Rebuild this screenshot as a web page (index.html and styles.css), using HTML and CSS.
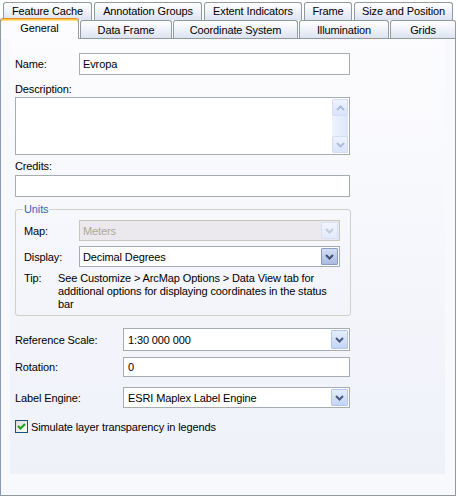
FILE: index.html
```html
<!DOCTYPE html>
<html>
<head>
<meta charset="utf-8">
<link rel="stylesheet" href="styles.css">
</head>
<body>
<div class="tabs">
  <div class="row row1">
    <div class="tab t-fc">Feature Cache</div>
    <div class="tab t-ag">Annotation Groups</div>
    <div class="tab t-ei">Extent Indicators</div>
    <div class="tab t-fr">Frame</div>
    <div class="tab t-sp">Size and Position</div>
  </div>
  <div class="row row2">
    <div class="tab sel t-ge">General</div>
    <div class="tab t-df">Data Frame</div>
    <div class="tab t-cs">Coordinate System</div>
    <div class="tab t-il">Illumination</div>
    <div class="tab t-gr">Grids</div>
  </div>
</div>
<div class="panel">
  <div class="page">
    <div class="line name-row">
      <span class="lbl lbl-name">Name:</span>
      <div class="input w-name">Evropa</div>
    </div>
    <div class="caption cap-desc">Description:</div>
    <div class="textarea">
      <div class="sb">
        <div class="sbbtn"><svg width="9" height="6" viewBox="0 0 9 6"><polyline points="1,5 4.5,1.5 8,5" fill="none" stroke="#aebcd9" stroke-width="2"/></svg></div>
        <div class="sbtrack"></div>
        <div class="sbbtn"><svg width="9" height="6" viewBox="0 0 9 6"><polyline points="1,1 4.5,4.5 8,1" fill="none" stroke="#aebcd9" stroke-width="2"/></svg></div>
      </div>
    </div>
    <div class="caption cap-cred">Credits:</div>
    <div class="input full cred"></div>
    <fieldset class="group">
      <legend>Units</legend>
      <div class="line map-row">
        <span class="lbl lbl-unit">Map:</span>
        <div class="combo disabled w-unit">
          <span class="val">Meters</span>
          <div class="btn"><svg width="9" height="6" viewBox="0 0 9 6"><polyline points="1,1 4.5,4.5 8,1" fill="none" stroke="#c3cad8" stroke-width="2"/></svg></div>
        </div>
      </div>
      <div class="line disp-row">
        <span class="lbl lbl-unit">Display:</span>
        <div class="combo w-unit">
          <span class="val">Decimal Degrees</span>
          <div class="btn dark"><svg width="9" height="6" viewBox="0 0 9 6"><polyline points="1,1 4.5,4.5 8,1" fill="none" stroke="#3f4f70" stroke-width="2"/></svg></div>
        </div>
      </div>
      <div class="tip">
        <span class="tip-lbl">Tip:</span>
        <span class="tip-txt">See Customize &gt; ArcMap Options &gt; Data View tab for<br>additional options for displaying coordinates in the status<br>bar</span>
      </div>
    </fieldset>
    <div class="line ref-row">
      <span class="lbl lbl-wide">Reference Scale:</span>
      <div class="combo w-wide h23">
        <span class="val">1:30 000 000</span>
        <div class="btn"><svg width="9" height="6" viewBox="0 0 9 6"><polyline points="1,1 4.5,4.5 8,1" fill="none" stroke="#4a5a7c" stroke-width="2"/></svg></div>
      </div>
    </div>
    <div class="line rot-row">
      <span class="lbl lbl-wide">Rotation:</span>
      <div class="input w-wide h20">0</div>
    </div>
    <div class="line eng-row">
      <span class="lbl lbl-wide">Label Engine:</span>
      <div class="combo w-wide">
        <span class="val">ESRI Maplex Label Engine</span>
        <div class="btn"><svg width="9" height="6" viewBox="0 0 9 6"><polyline points="1,1 4.5,4.5 8,1" fill="none" stroke="#4a5a7c" stroke-width="2"/></svg></div>
      </div>
    </div>
    <div class="check-row">
      <span class="cb"><svg width="11" height="11" viewBox="0 0 11 11"><polyline points="2,5 4.5,7.5 9,3" fill="none" stroke="#21a121" stroke-width="2.2"/></svg></span>
      <span class="cb-txt">Simulate layer transparency in legends</span>
    </div>
  </div>
  <div class="foot"></div>
</div>
</body>
</html>
```
FILE: styles.css
```css
* { box-sizing: border-box; }
body {
  margin: 0;
  width: 458px;
  height: 497px;
  background: #ffffff;
  font-family: "Liberation Sans", Arial, sans-serif;
  font-size: 11px;
  letter-spacing: -0.12px;
  color: #000;
  overflow: hidden;
}
.tabs { height: 38px; }
.row { display: flex; }
.row1 { padding: 2px 0 0 3px; gap: 2px; height: 19px; }
.row2 { height: 19px; gap: 1px; align-items: flex-end; position: relative; z-index: 2; }
.tab {
  display: flex;
  align-items: center;
  justify-content: center;
  border: 1px solid #919b9c;
  border-bottom: none;
  border-radius: 3px 3px 0 0;
  background: linear-gradient(#ffffff, #f1f3fa 45%, #dce3f1);
  white-space: nowrap;
}
.row1 .tab { height: 18px; padding-bottom: 1px; }
.row2 .tab { height: 18px; padding-top: 1px; }
.row2 .tab.sel {
  height: 21px;
  margin-bottom: -1px;
  background: #fcfcfe;
  border-top: 1px solid #e68b2c;
  box-shadow: inset 0 1px 0 #ffc73c, inset 0 2px 0 #ffe08a;
  padding-top: 0;
  padding-bottom: 3px;
}
.t-fc { width: 89px; }
.t-ag { width: 108px; }
.t-ei { width: 98px; }
.t-fr { width: 48px; }
.t-sp { width: 99px; }
.t-ge { width: 79px; }
.t-df { width: 92px; }
.t-cs { width: 125px; }
.t-il { width: 90px; }
.t-gr { width: 66px; }

.panel {
  width: 456px;
  height: 458px;
  border: 1px solid #919b9c;
  border-left-color: #8a99b6;
  background: #f8f9fd;
  display: flex;
  flex-direction: column;
}
.page {
  flex: 1;
  margin: 0 10px 0 9px;
  padding: 14px 0 0 5px;
  background: linear-gradient(#fcfcfe, #eff1f9);
}
.foot { height: 21px; }

.line { display: flex; align-items: center; }
.lbl { flex: none; }
.lbl-name { width: 64px; }
.lbl-unit { width: 55px; }
.lbl-wide { width: 108px; }

.input, .combo {
  border: 1px solid #a5acb2;
  background: #fff;
  height: 22px;
  display: flex;
  align-items: center;
  padding-left: 3px;
  white-space: nowrap;
}
.w-name { width: 271px; }
.full { width: 335px; }
.w-unit { width: 261px; }
.w-wide { width: 227px; padding-left: 4px; }
.h23 { height: 23px; }
.h20 { height: 20px; }
.combo { height: 21px; padding-right: 1px; }
.combo .val { flex: 1; }
.combo.h23 { height: 23px; }

.caption { line-height: 13px; height: 13px; }
.cap-desc { margin-top: 8px; }
.textarea {
  margin-top: 1px;
  width: 335px;
  height: 58px;
  border: 1px solid #a5acb2;
  background: #fff;
  display: flex;
  justify-content: flex-end;
  padding: 1px 1px 1px 0;
}
.sb { width: 16px; display: flex; flex-direction: column; background: linear-gradient(90deg, #eef3fd, #dde7fb); }
.sbbtn {
  height: 17px;
  border: 1px solid #d3def5;
  border-radius: 2px;
  background: linear-gradient(#eef3fe, #d9e4fb);
  display: flex; align-items: center; justify-content: center;
}
.sbtrack { flex: 1; }
.cap-cred { margin-top: 5px; }
.cred { margin-top: 2px; height: 22px; }

.group {
  margin: 6px 0 0 0;
  width: 336px;
  border: 1px solid #d0d0c8;
  border-radius: 3px;
  padding: 0 7px 4px 8px;
  min-width: 0;
}
.group legend {
  color: #3c62b4;
  padding: 0 1px;
  line-height: 13px;
  margin-left: -1px;
}
.map-row { margin-top: 4px; }
.disp-row { margin-top: 5px; }
.combo.disabled { background: #ebe9ed; border-color: #c9c7ba; color: #aca899; }
.btn {
  flex: none;
  width: 17px;
  height: 100%;
  border: 1px solid #b4c6ed;
  border-radius: 1px;
  background: linear-gradient(#e6eefd, #c4d4f6);
  display: flex; align-items: center; justify-content: center;
}
.combo { padding-top: 1px; padding-bottom: 1px; }
.disabled .btn { border-color: #d6e0f7; background: linear-gradient(#f1f5fd, #e2eafb); }
.btn.dark { border-color: #8a9cc4; background: linear-gradient(#d3def4, #aabbe0); }
.tip { display: flex; margin-top: 5px; line-height: 13px; }
.tip-lbl { width: 34px; flex: none; }
.ref-row { margin-top: 12px; }
.rot-row { margin-top: 6px; }
.eng-row { margin-top: 10px; }
.check-row { margin-top: 12px; display: flex; align-items: center; }
.cb {
  width: 13px; height: 13px;
  border: 1px solid #1c5180;
  background: linear-gradient(135deg, #dcdcd7, #fcfcfb);
  display: flex; align-items: center; justify-content: center;
  margin-right: 3px;
}
```
